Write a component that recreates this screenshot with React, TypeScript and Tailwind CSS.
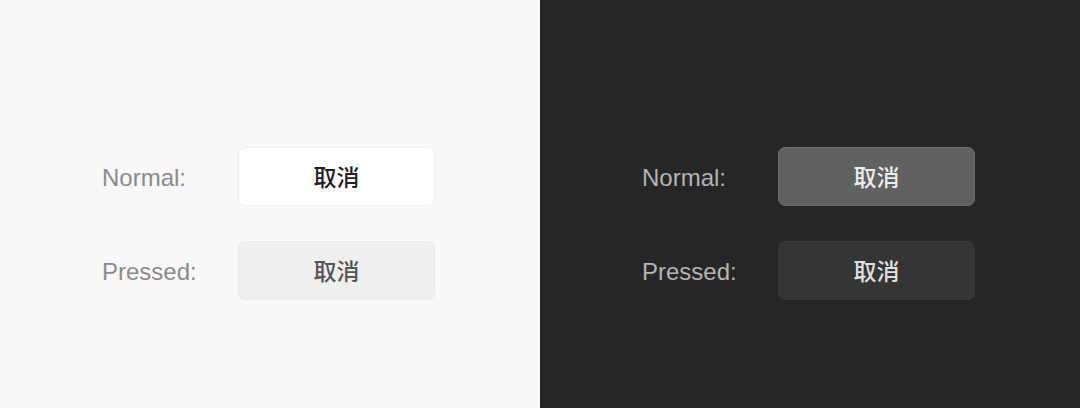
const font = { fontFamily: '"Liberation Sans", "Noto Sans CJK SC", sans-serif' };

type Theme = "light" | "dark";

function Panel({ theme }: { theme: Theme }) {
  const dark = theme === "dark";
  return (
    <div
      className={`flex h-[408px] w-[540px] flex-col gap-[35px] pl-[102px] pt-[147px] ${
        dark ? "bg-[#262626]" : "bg-[#f8f8f8]"
      }`}
    >
      <div className="flex items-center">
        <span className={`w-[136px] pt-[3px] text-[24px] ${dark ? "text-[#b4b4b4]" : "text-[#8b8b8b]"}`}>Normal:</span>
        <div
          className={`flex h-[59px] w-[197px] items-center justify-center rounded-[7px] pt-[3px] text-[23px] font-medium ${
            dark
              ? "border border-[#6a6a6a] bg-[#616161] text-[#ededed]"
              : "border border-[#f0f0f0] bg-white text-[#222]"
          }`}
        >
          取消
        </div>
      </div>
      <div className="flex items-center">
        <span className={`w-[136px] pt-[3px] text-[24px] ${dark ? "text-[#b4b4b4]" : "text-[#8b8b8b]"}`}>Pressed:</span>
        <div
          className={`flex h-[59px] w-[197px] items-center justify-center rounded-[7px] pt-[3px] text-[23px] font-medium ${
            dark
              ? "border border-[#383838] bg-[#353535] text-[#e0e0e0]"
              : "border border-[#ebebeb] bg-[#efefef] text-[#555]"
          }`}
        >
          取消
        </div>
      </div>
    </div>
  );
}

export default function App() {
  return (
    <div className="flex h-[408px] w-[1080px]" style={font}>
      <Panel theme="light" />
      <Panel theme="dark" />
    </div>
  );
}
